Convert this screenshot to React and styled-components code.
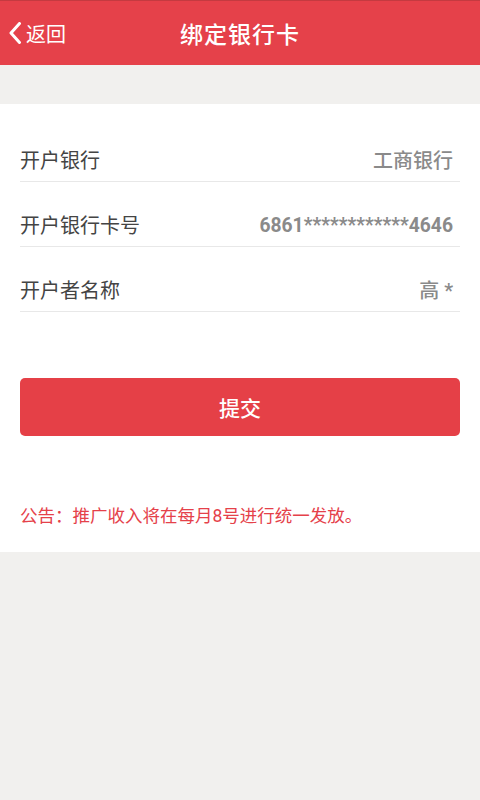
import React from 'react'
import styled, { createGlobalStyle } from 'styled-components'

const GlobalStyle = createGlobalStyle`
  html, body {
    margin: 0;
    padding: 0;
    background: #f1f0ee;
    font-family: Roboto, "Noto Sans CJK SC", "Noto Sans", sans-serif;
  }
  * {
    box-sizing: border-box;
  }
`

const Page = styled.div`
  width: 480px;
  min-height: 800px;
  background: #f1f0ee;
`

const Header = styled.div`
  height: 65px;
  background: #e5414a;
  border-top: 1px solid #c43a40;
  display: grid;
  grid-template-columns: 1fr auto 1fr;
  align-items: center;
  color: #fff;
`

const Back = styled.div`
  display: flex;
  align-items: center;
  padding-left: 8px;
  font-size: 20px;
  gap: 4px;
`

const Title = styled.div`
  font-size: 23px;
  font-weight: 500;
  letter-spacing: 1px;
`

const Card = styled.div`
  margin-top: 39px;
  background: #fff;
  padding: 13px 20px 24px;
`

const Row = styled.div`
  height: 65px;
  display: flex;
  align-items: flex-end;
  justify-content: space-between;
  padding-bottom: 8px;
  border-bottom: 1px solid #e8e8e8;
`

const Label = styled.div`
  font-size: 20px;
  line-height: 24px;
  color: #444;
`

const Value = styled.div`
  font-size: ${props => (props.bold ? '19.3px' : '20px')};
  line-height: 24px;
  color: #8a8a8a;
  padding-right: 7px;
  font-weight: ${props => (props.bold ? 700 : 500)};
`

const Submit = styled.button`
  display: block;
  width: 100%;
  height: 58px;
  margin-top: 66px;
  border: none;
  border-radius: 5px;
  background: #e54047;
  color: #fff;
  font-family: inherit;
  font-size: 21px;
  font-weight: 500;
`

const Notice = styled.div`
  margin-top: 68px;
  font-size: 17.5px;
  line-height: 24px;
  color: #e5414a;
`

const rows = [
  { label: '开户银行', value: '工商银行' },
  { label: '开户银行卡号', value: '6861************4646', bold: true },
  { label: '开户者名称', value: '高 *' }
]

export default function App () {
  return (
    <Page>
      <GlobalStyle />
      <Header>
        <Back>
          <svg width="14" height="22" viewBox="0 0 14 22">
            <path d="M11.5 1.5 L3 11 L11.5 20.5" fill="none" stroke="#fff" strokeWidth="3" strokeLinecap="round" strokeLinejoin="round" />
          </svg>
          <span>返回</span>
        </Back>
        <Title>绑定银行卡</Title>
        <div />
      </Header>
      <Card>
        {rows.map((row, i) => (
          <Row key={i}>
            <Label>{row.label}</Label>
            <Value bold={row.bold}>{row.value}</Value>
          </Row>
        ))}
        <Submit>提交</Submit>
        <Notice>公告：推广收入将在每月8号进行统一发放。</Notice>
      </Card>
    </Page>
  )
}
